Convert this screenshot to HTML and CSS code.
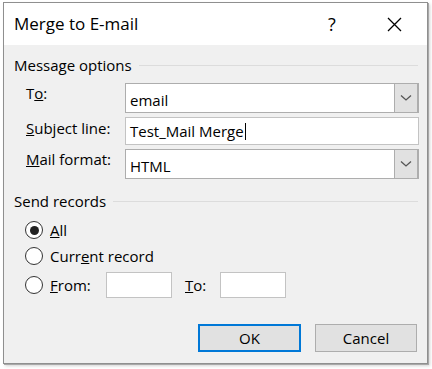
FILE: index.html
```html
<!DOCTYPE html>
<html lang="en">
<head>
<meta charset="UTF-8">
<meta name="viewport" content="width=device-width, initial-scale=1.0">
<title>Merge to E-mail</title>
<link rel="stylesheet" href="styles.css">
</head>
<body>

<div class="window">
  <div class="titlebar">
    <div class="title">Merge to E-mail</div>
    <div class="title-button">?</div>
    <div class="title-button">
      <svg width="15" height="15" viewBox="0 0 15 15">
        <path d="M1 1 L14 14 M14 1 L1 14" stroke="#000" stroke-width="1.3" fill="none"/>
      </svg>
    </div>
  </div>

  <div class="content">
    <div class="group-heading"><span>Message options</span><div class="rule"></div></div>

    <div class="field-row tall">
      <div class="label">T<u>o</u>:</div>
      <div class="combo">
        <div class="combo-text">email</div>
        <div class="combo-button">
          <svg width="12" height="8" viewBox="0 0 12 8"><path d="M1 1.5 L6 6 L11 1.5" stroke="#555" stroke-width="1.3" fill="none"/></svg>
        </div>
      </div>
    </div>

    <div class="field-row">
      <div class="label"><u>S</u>ubject line:</div>
      <div class="textbox">Test_Mail Merge<span class="caret"></span></div>
    </div>

    <div class="field-row tall">
      <div class="label"><u>M</u>ail format:</div>
      <div class="combo">
        <div class="combo-text">HTML</div>
        <div class="combo-button">
          <svg width="12" height="8" viewBox="0 0 12 8"><path d="M1 1.5 L6 6 L11 1.5" stroke="#555" stroke-width="1.3" fill="none"/></svg>
        </div>
      </div>
    </div>

    <div class="group-heading second"><span>Send records</span><div class="rule"></div></div>

    <div class="radio-row first">
      <span class="radio checked"></span>
      <span><u>A</u>ll</span>
    </div>
    <div class="radio-row">
      <span class="radio"></span>
      <span>Curr<u>e</u>nt record</span>
    </div>
    <div class="radio-row range">
      <span class="radio"></span>
      <span class="from-label"><u>F</u>rom:</span>
      <div class="small-box"></div>
      <span class="to-label"><u>T</u>o:</span>
      <div class="small-box"></div>
    </div>

    <div class="buttons">
      <button class="button default">OK</button>
      <button class="button">Cancel</button>
    </div>
  </div>
</div>

</body>
</html>
```

FILE: styles.css
```css
body {
  margin: 0;
  padding: 0;
  width: 432px;
  height: 369px;
  overflow: hidden;
  background-color: #fff;
  font-family: "Open Sans", "Noto Sans", sans-serif;
  font-size: 15px;
  color: #000;
}

.window {
  margin: 2px 0 0 3px;
  width: 423px;
  height: 360px;
  border: 1px solid #8f8f8f;
  box-shadow: 1px 1px 0 #a8a8a8, 2px 2px 3px rgba(0, 0, 0, 0.18);
  display: flex;
  flex-direction: column;
}

.titlebar {
  height: 42px;
  background-color: #fff;
  display: flex;
  align-items: center;
  padding: 0 2px 0 10px;
}

.title {
  flex: 1;
  font-size: 17px;
  padding-bottom: 2px;
}

.title-button {
  width: 62px;
  height: 42px;
  display: flex;
  align-items: center;
  justify-content: center;
  font-size: 18px;
}

.content {
  flex: 1;
  background-color: #f0f0f0;
  padding: 10px 8px 0 10px;
}

.group-heading {
  height: 20px;
  line-height: 20px;
  display: flex;
  align-items: center;
  padding-right: 1px;
}

.group-heading .rule {
  flex: 1;
  height: 1px;
  margin-left: 7px;
  background-color: #dcdcdc;
}

.group-heading.second {
  margin-top: 12px;
}

.field-row {
  display: flex;
  height: 28px;
  margin-top: 4px;
  padding-left: 12px;
}

.field-row.tall {
  height: 30px;
}

.group-heading + .field-row {
  margin-top: 8px;
}

.label {
  width: 99px;
  line-height: 20px;
  padding-top: 1px;
}

.field-row.tall .label {
  padding-top: 0;
}

.combo {
  flex: 1;
  display: flex;
  background-color: #fff;
  border: 1px solid #adadad;
}

.combo-text,
.textbox {
  flex: 1;
  padding-left: 4px;
  line-height: 26px;
}

.combo-text {
  padding-top: 4px;
  line-height: 24px;
}

.combo-button {
  width: 22px;
  background-color: #e1e1e1;
  border: 1px solid #adadad;
  border-right-width: 2px;
  margin: -1px -1px -1px 0;
  display: flex;
  align-items: center;
  justify-content: center;
}

.textbox {
  background-color: #fff;
  border: 1px solid #c3c3c3;
  display: flex;
  align-items: center;
}

.caret {
  display: inline-block;
  width: 1px;
  height: 17px;
  margin-left: 1px;
  background-color: #000;
}

.radio-row {
  display: flex;
  align-items: center;
  height: 26px;
  padding-left: 11px;
}

.radio-row.first {
  margin-top: 6px;
}

.radio-row.range {
  height: 28px;
  margin-top: 2px;
}

.radio {
  width: 16px;
  height: 16px;
  border: 1px solid #333;
  border-radius: 50%;
  background-color: #fff;
  margin-right: 7px;
  display: flex;
  align-items: center;
  justify-content: center;
}

.radio.checked::after {
  content: "";
  width: 9px;
  height: 9px;
  border-radius: 50%;
  background-color: #222;
}

.from-label {
  width: 56px;
}

.to-label {
  width: 35px;
  margin-left: 13px;
}

.small-box {
  width: 64px;
  height: 24px;
  background-color: #fff;
  border: 1px solid #c3c3c3;
}

.buttons {
  display: flex;
  justify-content: flex-end;
  gap: 14px;
  margin-top: 25px;
  padding-right: 2px;
}

.button {
  width: 102px;
  height: 28px;
  font-family: inherit;
  font-size: 15px;
  color: #000;
  background-color: #e1e1e1;
  border: 1px solid #adadad;
  padding: 0;
}

.button.default {
  width: 103px;
  border: 2px solid #0078d7;
}
```
